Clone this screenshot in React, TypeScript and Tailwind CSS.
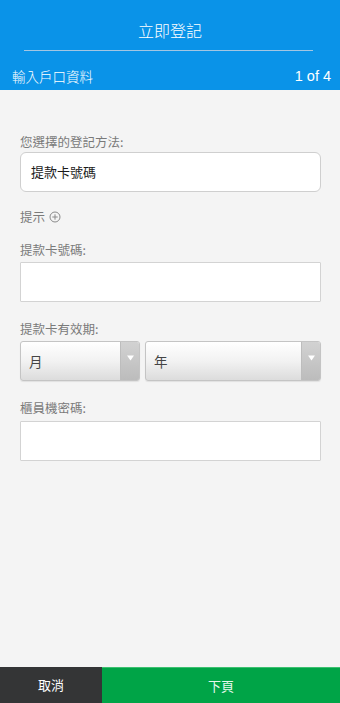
const font = { fontFamily: '"Noto Sans CJK TC", "Noto Sans", sans-serif' };

function Label({ children, className = "" }: { children: React.ReactNode; className?: string }) {
  return (
    <p className={`h-[18px] text-[12.5px] leading-[18px] text-[#7a7a7a] ${className}`}>{children}</p>
  );
}

function Select({ value, className = "" }: { value: string; className?: string }) {
  return (
    <div
      className={`flex h-[40px] overflow-hidden rounded-[3px] border border-[#c4c4c4] bg-gradient-to-b from-[#ffffff] via-[#f2f2f2] to-[#dcdcdc] shadow-[0_1px_1px_rgba(0,0,0,0.08)] ${className}`}
    >
      <span className="flex flex-1 items-center pl-[8px] text-[13.5px] text-[#444]">{value}</span>
      <span className="flex w-[19px] items-start justify-center border-l border-[#bdbdbd] bg-gradient-to-b from-[#d2d2d2] to-[#bcbcbc] pt-[13px]">
        <svg width="7" height="6" viewBox="0 0 7 6">
          <path d="M0 0.5h7L3.5 5.5z" fill="#fff" />
        </svg>
      </span>
    </div>
  );
}

export default function App() {
  return (
    <div className="flex min-h-screen flex-col bg-[#f4f4f4]" style={font}>
      <header className="h-[90px] bg-[#0a93e8] text-white">
        <h1 className="pt-[19px] text-center text-[16px] font-light leading-[22px]">立即登記</h1>
        <div className="ml-[24px] mr-[27px] mt-[9px] h-px bg-[#a3c6e2]" />
        <div className="mt-[15px] flex items-center justify-between pl-[12px] pr-[9px] text-[13.5px] font-light leading-[20px]">
          <span>輸入戶口資料</span>
          <span style={{ fontFamily: '"Liberation Sans", Arial, sans-serif' }} className="text-[14.5px]">
            1 of 4
          </span>
        </div>
      </header>

      <main className="flex-1 pl-5 pr-[19px] pt-[43px]">
        <Label>您選擇的登記方法:</Label>
        <div className="mt-px flex h-[40px] items-center rounded-[6px] border border-[#cfcfcf] bg-white pl-[10px] text-[13px] text-[#1a1a1a]">
          提款卡號碼
        </div>

        <div className="mt-[16px] flex h-[18px] items-center gap-[4px] text-[12.5px] text-[#7a7a7a]">
          <span>提示</span>
          <svg width="12" height="12" viewBox="0 0 12 12" fill="none" stroke="#8a8a8a" strokeWidth="1">
            <circle cx="6" cy="6" r="5" />
            <path d="M6 3.3v5.4M3.3 6h5.4" />
          </svg>
        </div>

        <Label className="mt-[15px]">提款卡號碼:</Label>
        <div className="mt-[3px] h-[40px] rounded-[1px] border border-[#d3d3d3] bg-white" />

        <Label className="mt-[18px]">提款卡有效期:</Label>
        <div className="mt-[3px] flex gap-[5px]">
          <Select value="月" className="w-[120px]" />
          <Select value="年" className="flex-1" />
        </div>

        <Label className="mt-[18px]">櫃員機密碼:</Label>
        <div className="mt-[4px] h-[40px] rounded-[1px] border border-[#d3d3d3] bg-white" />
      </main>

      <footer className="flex h-[36px] text-[13px] text-white">
        <button className="w-[102px] bg-[#343536]">取消</button>
        <button className="flex-1 border-t border-[#3cc06f] bg-[#00a447] text-[#e6f7ec]">下頁</button>
      </footer>
    </div>
  );
}
